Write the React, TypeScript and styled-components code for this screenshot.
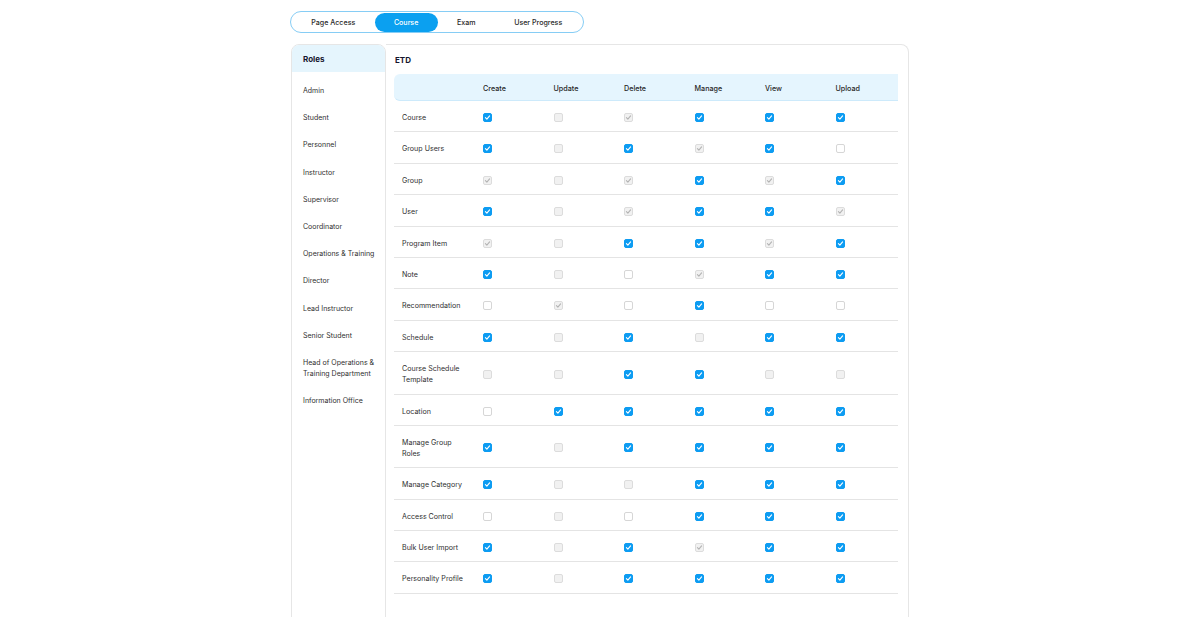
import React, { useState } from "react";
import styled, { createGlobalStyle } from "styled-components";

const GlobalStyle = createGlobalStyle`
  html, body {
    margin: 0;
    padding: 0;
    background: #ffffff;
    font-family: Inter, "Open Sans", "Liberation Sans", sans-serif;
    color: #2b2b2b;
    overflow: hidden;
  }
  * { box-sizing: border-box; }
`;

const Page = styled.div`
  width: 618px;
  margin: 0 auto;
  padding-top: 11px;
  display: flex;
  flex-direction: column;
  gap: 11px;
`;

const TabBar = styled.div`
  align-self: flex-start;
  display: flex;
  align-items: center;
  height: 22px;
  padding: 0 1px;
  border: 1.5px solid #86cdf5;
  border-radius: 12px;
  margin-left: -1px;
`;

const Tab = styled.button<{ $active?: boolean }>`
  height: 19px;
  padding: 0 19.3px;
  border: none;
  border-radius: 10px;
  font-family: inherit;
  font-size: 7.1px;
  font-weight: 500;
  cursor: pointer;
  background: ${(p) => (p.$active ? "#0ba0f0" : "transparent")};
  color: ${(p) => (p.$active ? "#ffffff" : "#2a2a2a")};
`;

const Panels = styled.div`
  display: flex;
  height: 600px;
`;

const RolesPanel = styled.div`
  width: 95px;
  flex-shrink: 0;
  border: 1.5px solid #e6e6e6;
  border-radius: 8px 8px 0 0;
  overflow: hidden;
  display: flex;
  flex-direction: column;
`;

const RolesHeader = styled.div`
  height: 27px;
  display: flex;
  align-items: center;
  padding-left: 11px;
  background: #e5f5fd;
  font-size: 8px;
  font-weight: 700;
  color: #15162e;
`;

const RoleList = styled.div`
  padding-top: 5px;
  display: flex;
  flex-direction: column;
`;

const RoleItem = styled.div`
  padding: 8.1px 10px 8.1px 11px;
  font-size: 7px;
  line-height: 11px;
  color: #2f2f2f;
  cursor: pointer;
`;

const MatrixPanel = styled.div`
  flex: 1;
  border: 1.5px solid #e6e6e6;
  border-left: none;
  border-radius: 0 8px 0 0;
  padding: 0 10px 0 8px;
`;

const MatrixTitle = styled.div`
  height: 29px;
  display: flex;
  align-items: center;
  padding-left: 1px;
  font-size: 8px;
  font-weight: 700;
  color: #15162e;
`;

const Grid = styled.div`
  display: grid;
  grid-template-columns: 89px repeat(5, 70.5px) 62px;
`;

const HeaderRow = styled.div`
  display: contents;
`;

const HeadCell = styled.div<{ $first?: boolean }>`
  height: 27px;
  display: flex;
  align-items: center;
  padding-top: 2px;
  background: #e5f5fe;
  border-bottom: 1px solid #cdeafb;
  font-size: 7.2px;
  font-weight: 500;
  color: #262626;
  border-radius: ${(p) => (p.$first ? "6px 0 0 6px" : "0")};
`;

const Cell = styled.div<{ $label?: boolean }>`
  display: flex;
  align-items: center;
  padding: 11px ${(p) => (p.$label ? "18px" : "0")} 8.4px
    ${(p) => (p.$label ? "8px" : "0")};
  border-bottom: 1.3px solid #e4e4e4;
  font-size: 7.1px;
  line-height: 11px;
  color: #2f2f2f;
`;

type State = "C" | "D" | "G" | "U";

const Box = styled.span<{ $state: State }>`
  width: 9px;
  height: 9px;
  border-radius: 2px;
  display: inline-flex;
  align-items: center;
  justify-content: center;
  cursor: ${(p) => (p.$state === "D" || p.$state === "G" ? "not-allowed" : "pointer")};
  background: ${(p) =>
    p.$state === "C" ? "#0d9cf2" : p.$state === "U" ? "#ffffff" : "#f1f1f1"};
  border: 1px solid
    ${(p) =>
      p.$state === "C" ? "#0d9cf2" : p.$state === "U" ? "#d6d6d6" : "#dcdcdc"};
`;

const Check = ({ state, onToggle }: { state: State; onToggle: () => void }) => (
  <Box $state={state} onClick={onToggle}>
    {(state === "C" || state === "D") && (
      <svg width="7" height="7" viewBox="0 0 10 10">
        <path
          d="M2 5.3 L4.1 7.4 L8 2.8"
          fill="none"
          stroke={state === "C" ? "#ffffff" : "#b4b4b4"}
          strokeWidth="1.6"
          strokeLinecap="round"
          strokeLinejoin="round"
        />
      </svg>
    )}
  </Box>
);

const tabs = ["Page Access", "Course", "Exam", "User Progress"];

const roles = [
  "Admin",
  "Student",
  "Personnel",
  "Instructor",
  "Supervisor",
  "Coordinator",
  "Operations & Training",
  "Director",
  "Lead Instructor",
  "Senior Student",
  "Head of Operations & Training Department",
  "Information Office",
];

const actions = ["Create", "Update", "Delete", "Manage", "View", "Upload"];

const initialRows: { name: string; perms: State[] }[] = [
  { name: "Course", perms: ["C", "G", "D", "C", "C", "C"] },
  { name: "Group Users", perms: ["C", "G", "C", "D", "C", "U"] },
  { name: "Group", perms: ["D", "G", "D", "C", "D", "C"] },
  { name: "User", perms: ["C", "G", "D", "C", "C", "D"] },
  { name: "Program Item", perms: ["D", "G", "C", "C", "D", "C"] },
  { name: "Note", perms: ["C", "G", "U", "D", "C", "C"] },
  { name: "Recommendation", perms: ["U", "D", "U", "C", "U", "U"] },
  { name: "Schedule", perms: ["C", "G", "C", "G", "C", "C"] },
  { name: "Course Schedule Template", perms: ["G", "G", "C", "C", "G", "G"] },
  { name: "Location", perms: ["U", "C", "C", "C", "C", "C"] },
  { name: "Manage Group Roles", perms: ["C", "G", "C", "C", "C", "C"] },
  { name: "Manage Category", perms: ["C", "G", "G", "C", "C", "C"] },
  { name: "Access Control", perms: ["U", "G", "U", "C", "C", "C"] },
  { name: "Bulk User Import", perms: ["C", "G", "C", "D", "C", "C"] },
  { name: "Personality Profile", perms: ["C", "G", "C", "C", "C", "C"] },
];

export default function App() {
  const [activeTab, setActiveTab] = useState("Course");
  const [rows, setRows] = useState(initialRows);

  const toggle = (r: number, c: number) => {
    setRows((prev) =>
      prev.map((row, i) => {
        if (i !== r) return row;
        const s = row.perms[c];
        if (s === "D" || s === "G") return row;
        const perms = [...row.perms];
        perms[c] = s === "C" ? "U" : "C";
        return { ...row, perms };
      })
    );
  };

  return (
    <>
      <GlobalStyle />
      <Page>
        <TabBar>
          {tabs.map((t) => (
            <Tab key={t} $active={t === activeTab} onClick={() => setActiveTab(t)}>
              {t}
            </Tab>
          ))}
        </TabBar>

        <Panels>
          <RolesPanel>
            <RolesHeader>Roles</RolesHeader>
            <RoleList>
              {roles.map((r) => (
                <RoleItem key={r}>{r}</RoleItem>
              ))}
            </RoleList>
          </RolesPanel>

          <MatrixPanel>
            <MatrixTitle>ETD</MatrixTitle>
            <Grid>
              <HeaderRow>
                <HeadCell $first />
                {actions.map((a) => (
                  <HeadCell key={a}>{a}</HeadCell>
                ))}
              </HeaderRow>
              {rows.map((row, r) => (
                <React.Fragment key={row.name}>
                  <Cell $label>{row.name}</Cell>
                  {row.perms.map((s, c) => (
                    <Cell key={c}>
                      <Check state={s} onToggle={() => toggle(r, c)} />
                    </Cell>
                  ))}
                </React.Fragment>
              ))}
            </Grid>
          </MatrixPanel>
        </Panels>
      </Page>
    </>
  );
}
